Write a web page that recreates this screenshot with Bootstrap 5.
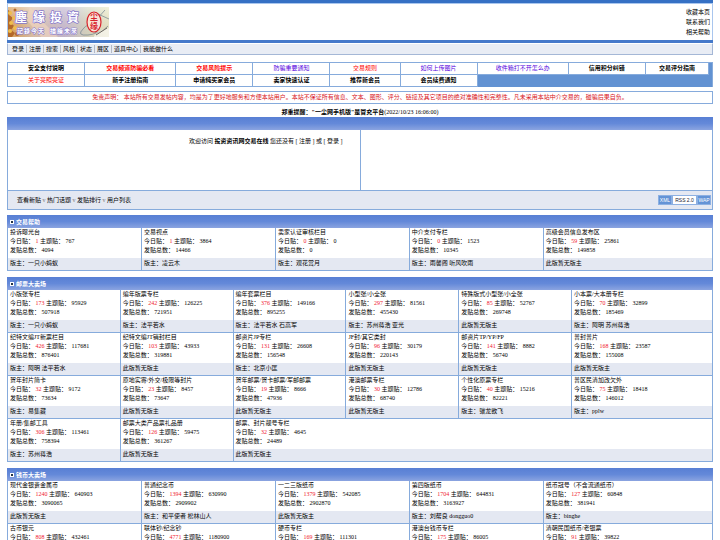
<!DOCTYPE html>
<html lang="zh-CN">
<head>
<meta charset="utf-8">
<meta name="viewport" content="width=device-width, initial-scale=1">
<title>投资资讯网交易在线</title>
<link href="https://cdn.jsdelivr.net/npm/bootstrap@5.3.0/dist/css/bootstrap.min.css" rel="stylesheet">
<style>
  :root { --line: #86abdc; --panel: #e4e8f2; }
  body { font: 6px/9px "Liberation Serif", "Noto Sans CJK SC", serif; color: #000; background: #fff; height: 100vh; }
  a { color: inherit; text-decoration: none; }
  .page { padding: 0 7px; }
  table { width: 100%; table-layout: fixed; border-collapse: separate; border-spacing: 0; }
  .stripe-top { height: 4px; background: #3570c4; border-bottom: 1px solid #a9c6ee; }
  .masthead { height: 36px; border: solid #a9c6ee; border-width: 0 1px; }
  .masthead svg { width: 101px; height: 30px; margin-top: 3px; display: block; }
  .side-links { line-height: 10px; padding: 3px 2px 0 0; }
  .stripe-low { height: 3px; background: #4579ca; }
  .menu { height: 12px; line-height: 11px; background: #e8ecf4; border: 1px solid #a4b7d6; border-top-color: #fff; padding-left: 2px; }
  .menu a { padding: 0 2px; height: 8px; line-height: 8px; }
  .menu a + a { border-left: 1px solid #b4bac6; }
  .guide { margin-top: 7px; background: #6292d2; border: solid var(--line); border-width: 1px 1px 0; padding-right: 3px; }
  .guide td { height: 12px; line-height: 11px; text-align: center; padding: 0; background: #fff; border: solid var(--line); border-width: 0 1px 1px 0; font-weight: 700; }
  .guide td.rest { background: #6292d2; border: 0; }
  .guide .hot { color: #f00; }
  .guide .thin { font-weight: 400; }
  .guide .seen { color: #50d; font-weight: 400; }
  .notice { margin-top: 4px; height: 13px; line-height: 11px; border: 1px solid var(--line); color: #d8141c; }
  .warn { height: 13px; line-height: 17px; }
  .bar { height: 13px; line-height: 13px; background: linear-gradient(#587fd4, #6489d9 50%, #8ba4e0); color: #fff; font-weight: 700; font-size: 6px; padding-left: 3px; }
  .bar svg { width: 4px; height: 4px; }
  .board .bar { gap: 2px; padding-top: 1px; }
  .hello { border: 1px solid var(--line); border-top: 0; height: 61px; }
  .hello > div { flex: 1 1 0; padding: 7px 17px 0 0; }
  .hello > div + div { border-left: 1px solid var(--line); }
  .tools { height: 19px; background: var(--panel); border: 1px solid var(--line); border-top: 0; padding: 0 1px 0 9px; }
  .tools .sep { color: #777; }
  .feeds { font: 5px/8px "Liberation Sans", sans-serif; }
  .feeds a { background: #6393d6; color: #fff; border: 1px solid #8db0e2; height: 10px; text-align: center; width: 14px; }
  .feeds .rss { width: 25px; background: #fff; color: #223; }
  .board { margin-top: 6px; }
  .board:first-child { margin-top: 5px; }
  .board table { border-left: 1px solid var(--line); font-family: "Liberation Serif", "Noto Sans CJK TC", serif; }
  .board td { padding: 0; height: 43px; vertical-align: top; border: solid var(--line); border-width: 0 1px 1px 0; }
  .info { height: 30px; padding: 0 2px; white-space: nowrap; }
  .info b { font-weight: 400; color: #f02030; }
  .host { height: 12px; line-height: 11px; padding: 0 2px; background: var(--panel); white-space: nowrap; }
</style>
<script src="https://cdn.jsdelivr.net/npm/bootstrap@5.3.0/dist/js/bootstrap.bundle.min.js"></script>
</head>
<body class="overflow-hidden">
<div class="page">
  <header>
    <div class="stripe-top"></div>
    <div class="masthead d-flex justify-content-between align-items-start">
      <a href="#"><svg viewBox="0 0 101 30" role="img" aria-label="塵緣投資">
        <defs>
          <linearGradient id="paper"><stop offset="0" stop-color="#d99a4e"/><stop offset=".25" stop-color="#dcc4ae"/><stop offset=".55" stop-color="#c3bad8"/><stop offset=".78" stop-color="#d5dac8"/><stop offset="1" stop-color="#e9ebc9"/></linearGradient>
          <linearGradient id="fade" x2="0" y2="1"><stop offset="0" stop-color="#fff" stop-opacity=".35"/><stop offset="1" stop-color="#b98b6b" stop-opacity=".15"/></linearGradient>
        </defs>
        <rect width="101" height="30" fill="url(#paper)"/><rect width="101" height="30" fill="url(#fade)"/>
        <g fill="#b3682a"><path d="M0 3l3 2-2 3 4 3-3 4 4 4-3 4 4 3-3 4H0z"/><circle cx="9" cy="27" r="2"/><circle cx="7" cy="3" r="1.5"/></g>
        <g fill="#efbd4c"><circle cx="2" cy="6" r="2"/><circle cx="6" cy="11" r="2"/><circle cx="3" cy="16" r="2"/><circle cx="7" cy="21" r="2"/><circle cx="2" cy="24" r="2"/><circle cx="10" cy="5" r="1.5"/></g>
        <path d="M22 0l12 14L50 30H33L18 12z" fill="#f1d7c3" opacity=".6"/>
        <path d="M75 22q5-7 11-1t-6 7-5-6M87 26q5 1 13-7M90 7l11 5M89 12l8-9" fill="none" stroke="#7e8d96" stroke-width=".8"/>
        <path d="M86 29q5-6 15-8v9H86z" fill="#fff" opacity=".6"/>
        <path d="M88 28l11-7" stroke="#6c665c" stroke-width="1"/>
        <g font-family="'Noto Sans CJK TC',sans-serif" font-weight="700" fill="#fff" stroke="#8577cc" paint-order="stroke" stroke-linejoin="round">
          <text y="15" font-size="12" stroke-width="1.4"><tspan x="7">塵</tspan><tspan x="25">緣</tspan><tspan x="42">投</tspan><tspan x="59">資</tspan></text>
          <text y="26" font-size="6" stroke-width="1"><tspan x="9">記</tspan><tspan x="16">錄</tspan><tspan x="23">今</tspan><tspan x="30">天</tspan><tspan x="42">描</tspan><tspan x="49">繪</tspan><tspan x="56">未</tspan><tspan x="63">來</tspan></text>
        </g>
        <ellipse cx="86" cy="15" rx="7" ry="10" fill="#f8e4d8" stroke="#d8242c" stroke-width="1.2"/>
        <g font-family="'Noto Sans CJK SC',sans-serif" font-weight="700" font-size="8" fill="#d8242c" text-anchor="middle"><text x="86" y="13">尘</text><text x="86" y="22">缘</text></g>
      </svg></a>
      <div class="side-links d-flex flex-column text-end"><a href="#">收藏本页</a><a href="#">联系我们</a><a href="#">相关帮助</a></div>
    </div>
    <div class="stripe-low"></div>
    <nav class="menu d-flex align-items-center"><a href="#">登录</a><a href="#">注册</a><a href="#">搜索</a><a href="#">风格</a><a href="#">状态</a><a href="#">展区</a><a href="#">道具中心</a><a href="#">我能做什么</a></nav>
  </header>

  <div class="guide">
    <table>
      <colgroup><col style="width:11%"><col style="width:13%"><col style="width:11%"><col style="width:11%"><col style="width:10%"><col style="width:11%"><col style="width:13%"><col style="width:11%"><col style="width:9%"></colgroup>
      <tr><td><a href="#">安全支付说明</a></td><td class="hot"><a href="#">交易频道防骗必看</a></td><td class="hot"><a href="#">交易风险提示</a></td><td class="seen"><a href="#">防骗重要通知</a></td><td class="hot thin"><a href="#">交易规则</a></td><td class="seen"><a href="#">如何上传图片</a></td><td class="seen"><a href="#">收件箱打不开怎么办</a></td><td><a href="#">信用积分纠错</a></td><td><a href="#">交易评分指南</a></td></tr>
      <tr><td class="hot thin"><a href="#">关于亮照亮证</a></td><td><a href="#">新手注册指南</a></td><td><a href="#">申请纯买家会员</a></td><td><a href="#">卖家快速认证</a></td><td><a href="#">推荐新会员</a></td><td><a href="#">会员续费通知</a></td><td class="rest" colspan="3"></td></tr>
    </table>
  </div>

  <div class="notice text-center">免责声明： 本站所有交易发帖内容，均是为了更好地服务和方便本站用户。本站不保证所有信息、文本、图形、评分、链接及其它项目的绝对准确性和完整性。凡未采用本站中介交易的，碰骗后果自负。</div>
  <div class="warn text-center"><a href="#"><strong>郑重提醒："一尘网手机版"是冒充平台</strong>(2022/10/23 16:06:00)</a></div>

  <section>
    <div class="bar"></div>
    <div class="hello d-flex">
      <div class="text-end">欢迎访问 <strong>投资资讯网交易在线</strong> 您还没有 [ <a href="#">注册</a> ] 或 [ <a href="#">登录</a> ]</div>
      <div></div>
    </div>
    <div class="tools d-flex align-items-center justify-content-between">
      <div><a href="#">查看新贴</a><span class="sep"> v </span><a href="#">热门话题</a><span class="sep"> v </span><a href="#">发贴排行</a><span class="sep"> v </span><a href="#">用户列表</a></div>
      <div class="feeds d-flex"><a href="#">XML</a><a class="rss" href="#">RSS 2.0</a><a href="#">WAP</a></div>
    </div>
  </section>

  <main id="boards"></main>
</div>
<script>
  // Each forum: [name, posts today, topics, total posts, moderators]
  const boards = [
    { title: '交易帮助', cols: 5, share: 19, forums: [
      ['投诉曝光台', 1, 767, 4094, '一只小蚂蚁'], ['交易视点', 1, 3864, 14466, '凌云木'], ['卖家认证审核栏目', 0, 0, 0, '观花赏月'],
      ['中介支付专栏', 0, 1523, 10345, '雨馨阁 听风吹雨'], ['高级会员信息发布区', 59, 25861, 149858, '']] },
    { title: '邮票大卖场', cols: 6, share: 16, forums: [
      ['小版张专栏', 173, 95929, 507918, '一只小蚂蚁'], ['编年版票专栏', 242, 126225, 721951, '法平若水'], ['编年套票栏目', 376, 149166, 895255, '法平若水 石高军'],
      ['小型张/小全张', 297, 81561, 455430, '苏州蒋浩 亚光'], ['特殊版式小型张/小全张', 85, 52767, 269748, ''], ['小本票/大本册专栏', 70, 32899, 185469, '阿明 苏州蒋浩'],
      ['纪特文编JT新票栏目', 426, 117681, 876401, '阿明 法平若水'], ['纪特文编JT销封栏目', 103, 43933, 319881, ''], ['邮资片JP专栏', 131, 26608, 156548, '北京小匡'],
      ['JF封/其它类封', 96, 30179, 220143, ''], ['邮资片TP/YP/FP', 141, 8882, 56740, ''], ['普封普片', 168, 23587, 155008, ''],
      ['贺年封片简卡', 32, 9172, 73634, '易集藏'], ['原地实寄/外交/极限等封片', 23, 8457, 73647, ''], ['贺年邮票/贺卡邮票/军邮邮票', 19, 8666, 47936, ''],
      ['港澳邮票专栏', 30, 12786, 68740, ''], ['个性化原票专栏', 40, 15216, 82221, '骧龙欲飞'], ['普区民清加改欠外', 75, 18418, 146012, 'pplw'],
      ['年册/集邮工具', 306, 113461, 758394, '苏州蒋浩'], ['邮票大类产品票礼品册', 126, 59475, 361267, ''], ['邮票、封片靓号专栏', 32, 4645, 24489, '']] },
    { title: '钱币大卖场', cols: 5, share: 19, forums: [
      ['现代金银贵金属币', 1240, 640903, 3090065, ''], ['普通纪念币', 1394, 630990, 2909902, '和平使者 松林山人'], ['一二三版纸币', 1379, 542085, 2902870, ''],
      ['第四版纸币', 1704, 644831, 3163927, '刘帮良 dongguo0'], ['纸币冠号（不含流通纸币）', 127, 60848, 381941, 'binghe'],
      ['古币银元', 808, 432461], ['联体钞/纪念钞', 4771, 1180900], ['硬币专栏', 169, 111301], ['港澳台钱币专栏', 175, 86005], ['清朝民国纸币/老银票', 91, 39822]] }
  ];
  const cell = ([name, today, topics, total, host], span) => `<td colspan="${span}"><div class="info"><a href="#">${name}</a><br>今日贴： <b>${today}</b> 主题贴： ${topics}` +
    (total === undefined ? '</div>' : `<br>发贴总数： ${total}</div><div class="host">${host ? '版主：' + host : '此版暂无版主'}</div>`) + '</td>';
  document.getElementById('boards').innerHTML = boards.map(({ title, cols, share, forums }) => {
    let rows = '';
    for (let i = 0; i < forums.length; i += cols) {
      const part = forums.slice(i, i + cols);
      rows += '<tr>' + part.map((f, k) => cell(f, k === part.length - 1 ? cols - k : 1)).join('') + '</tr>';
    }
    return `<section class="board"><div class="bar d-flex align-items-center"><svg viewBox="0 0 4 4"><path d="M0 0h4v4H0z" fill="#fff"/><path d="M1 1h2v2H1z" fill="#234"/></svg>${title}</div>
      <table><colgroup>${`<col style="width:${share}%">`.repeat(cols - 1)}<col></colgroup>${rows}</table></section>`;
  }).join('');
</script>
</body>
</html>
